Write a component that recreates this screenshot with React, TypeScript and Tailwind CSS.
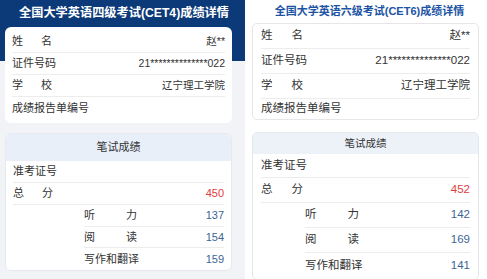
import React from "react"

const font = { fontFamily: '"Liberation Sans", "Noto Sans CJK SC", sans-serif' }

type Row = { label: string; value?: string }

const info: Row[] = [
  { label: "姓名", value: "赵**" },
  { label: "证件号码", value: "21**************022" },
  { label: "学校", value: "辽宁理工学院" },
  { label: "成绩报告单编号", value: "" },
]

function Label({ text, w }: { text: string; w: number }) {
  // two-char labels are spread over a four-char width
  if (text.length === 2) {
    return (
      <span className="flex justify-between" style={{ width: w }}>
        <span>{text[0]}</span>
        <span>{text[1]}</span>
      </span>
    )
  }
  return <span>{text}</span>
}

function LeftPanel() {
  const scores = [
    { label: "听力", value: "137" },
    { label: "阅读", value: "154" },
    { label: "写作和翻译", value: "159" },
  ]
  return (
    <div className="w-[245px] h-[279px] bg-[linear-gradient(#0c3a78_0_61px,#f2f3f6_61px)] text-[11px] text-[#333]">
      <div className="h-[27px] flex items-center justify-center text-white text-[12.2px] font-bold pl-[3px]">
        全国大学英语四级考试(CET4)成绩详情
      </div>
      <div className="ml-[5px] w-[227px] bg-white rounded-[6px] px-[7px] pt-[4px] pb-[4px]">
        {info.map((r, i) => (
          <div
            key={r.label}
            className={`h-[22px] flex items-center justify-between ${i < 3 ? "border-b border-[#ececec]" : ""}`}
          >
            <Label text={r.label} w={40} />
            <span className="text-[10.5px]">{r.value}</span>
          </div>
        ))}
      </div>
      <div className="ml-[5px] mt-[10px] w-[227px] bg-white rounded-[6px] overflow-hidden border border-[#e6eaf0]">
        <div className="h-[27px] bg-[#e9eff9] flex items-center justify-center">笔试成绩</div>
        <div className="px-[7px]">
          <div className="h-[22px] flex items-center border-b border-[#ececec]">准考证号</div>
          <div className="h-[22px] flex items-center justify-between border-b border-[#ececec]">
            <Label text="总分" w={40} />
            <span className="text-[#e23b3b] text-[11px]">450</span>
          </div>
          <div className="pl-[71px]">
            {scores.map((s, i) => (
              <div
                key={s.label}
                className={`h-[21.5px] flex items-center justify-between ${i < 2 ? "border-b border-[#ececec]" : ""}`}
              >
                <Label text={s.label} w={53} />
                <span className="text-[#3d6593] text-[11px]">{s.value}</span>
              </div>
            ))}
          </div>
        </div>
      </div>
    </div>
  )
}

function RightPanel() {
  const scores = [
    { label: "听力", value: "142" },
    { label: "阅读", value: "169" },
    { label: "写作和翻译", value: "141" },
  ]
  const heights = ["h-[25px]", "h-[25px]", "h-[25px]", "h-[20px]"]
  return (
    <div className="w-[242px] h-[279px] bg-white text-[11.5px] text-[#333] pl-[7px]">
      <div className="h-[23px] flex items-center justify-center text-[#1c54a3] text-[11px] font-bold">
        全国大学英语六级考试(CET6)成绩详情
      </div>
      <div className="w-[227px] border border-[#e6e6e6] rounded-[5px] px-[8px]">
        {info.map((r, i) => (
          <div
            key={r.label}
            className={`${heights[i]} flex items-center justify-between ${i < 3 ? "border-b border-[#ececec]" : ""}`}
          >
            <Label text={r.label} w={42} />
            <span className="text-[11.5px]">{r.value}</span>
          </div>
        ))}
      </div>
      <div className="mt-[12px] w-[227px] border border-[#e3e6ea] rounded-[5px] overflow-hidden">
        <div className="h-[21px] bg-[#edf1f8] flex items-center justify-center text-[10.5px]">笔试成绩</div>
        <div className="px-[8px]">
          <div className="h-[24px] flex items-center border-b border-[#ececec]">准考证号</div>
          <div className="h-[25px] flex items-center justify-between border-b border-[#ececec]">
            <Label text="总分" w={42} />
            <span className="text-[#e23b3b]">452</span>
          </div>
          <div className="pl-[44px]">
            {scores.map((s, i) => (
              <div
                key={s.label}
                className={`${i < 2 ? "h-[25px] border-b border-[#ececec]" : "h-[26px]"} flex items-center justify-between`}
              >
                <Label text={s.label} w={54} />
                <span className="text-[#3d6593]">{s.value}</span>
              </div>
            ))}
          </div>
        </div>
      </div>
    </div>
  )
}

export default function App() {
  return (
    <div className="w-[487px] h-[279px] flex bg-white overflow-hidden" style={font}>
      <LeftPanel />
      <RightPanel />
    </div>
  )
}
